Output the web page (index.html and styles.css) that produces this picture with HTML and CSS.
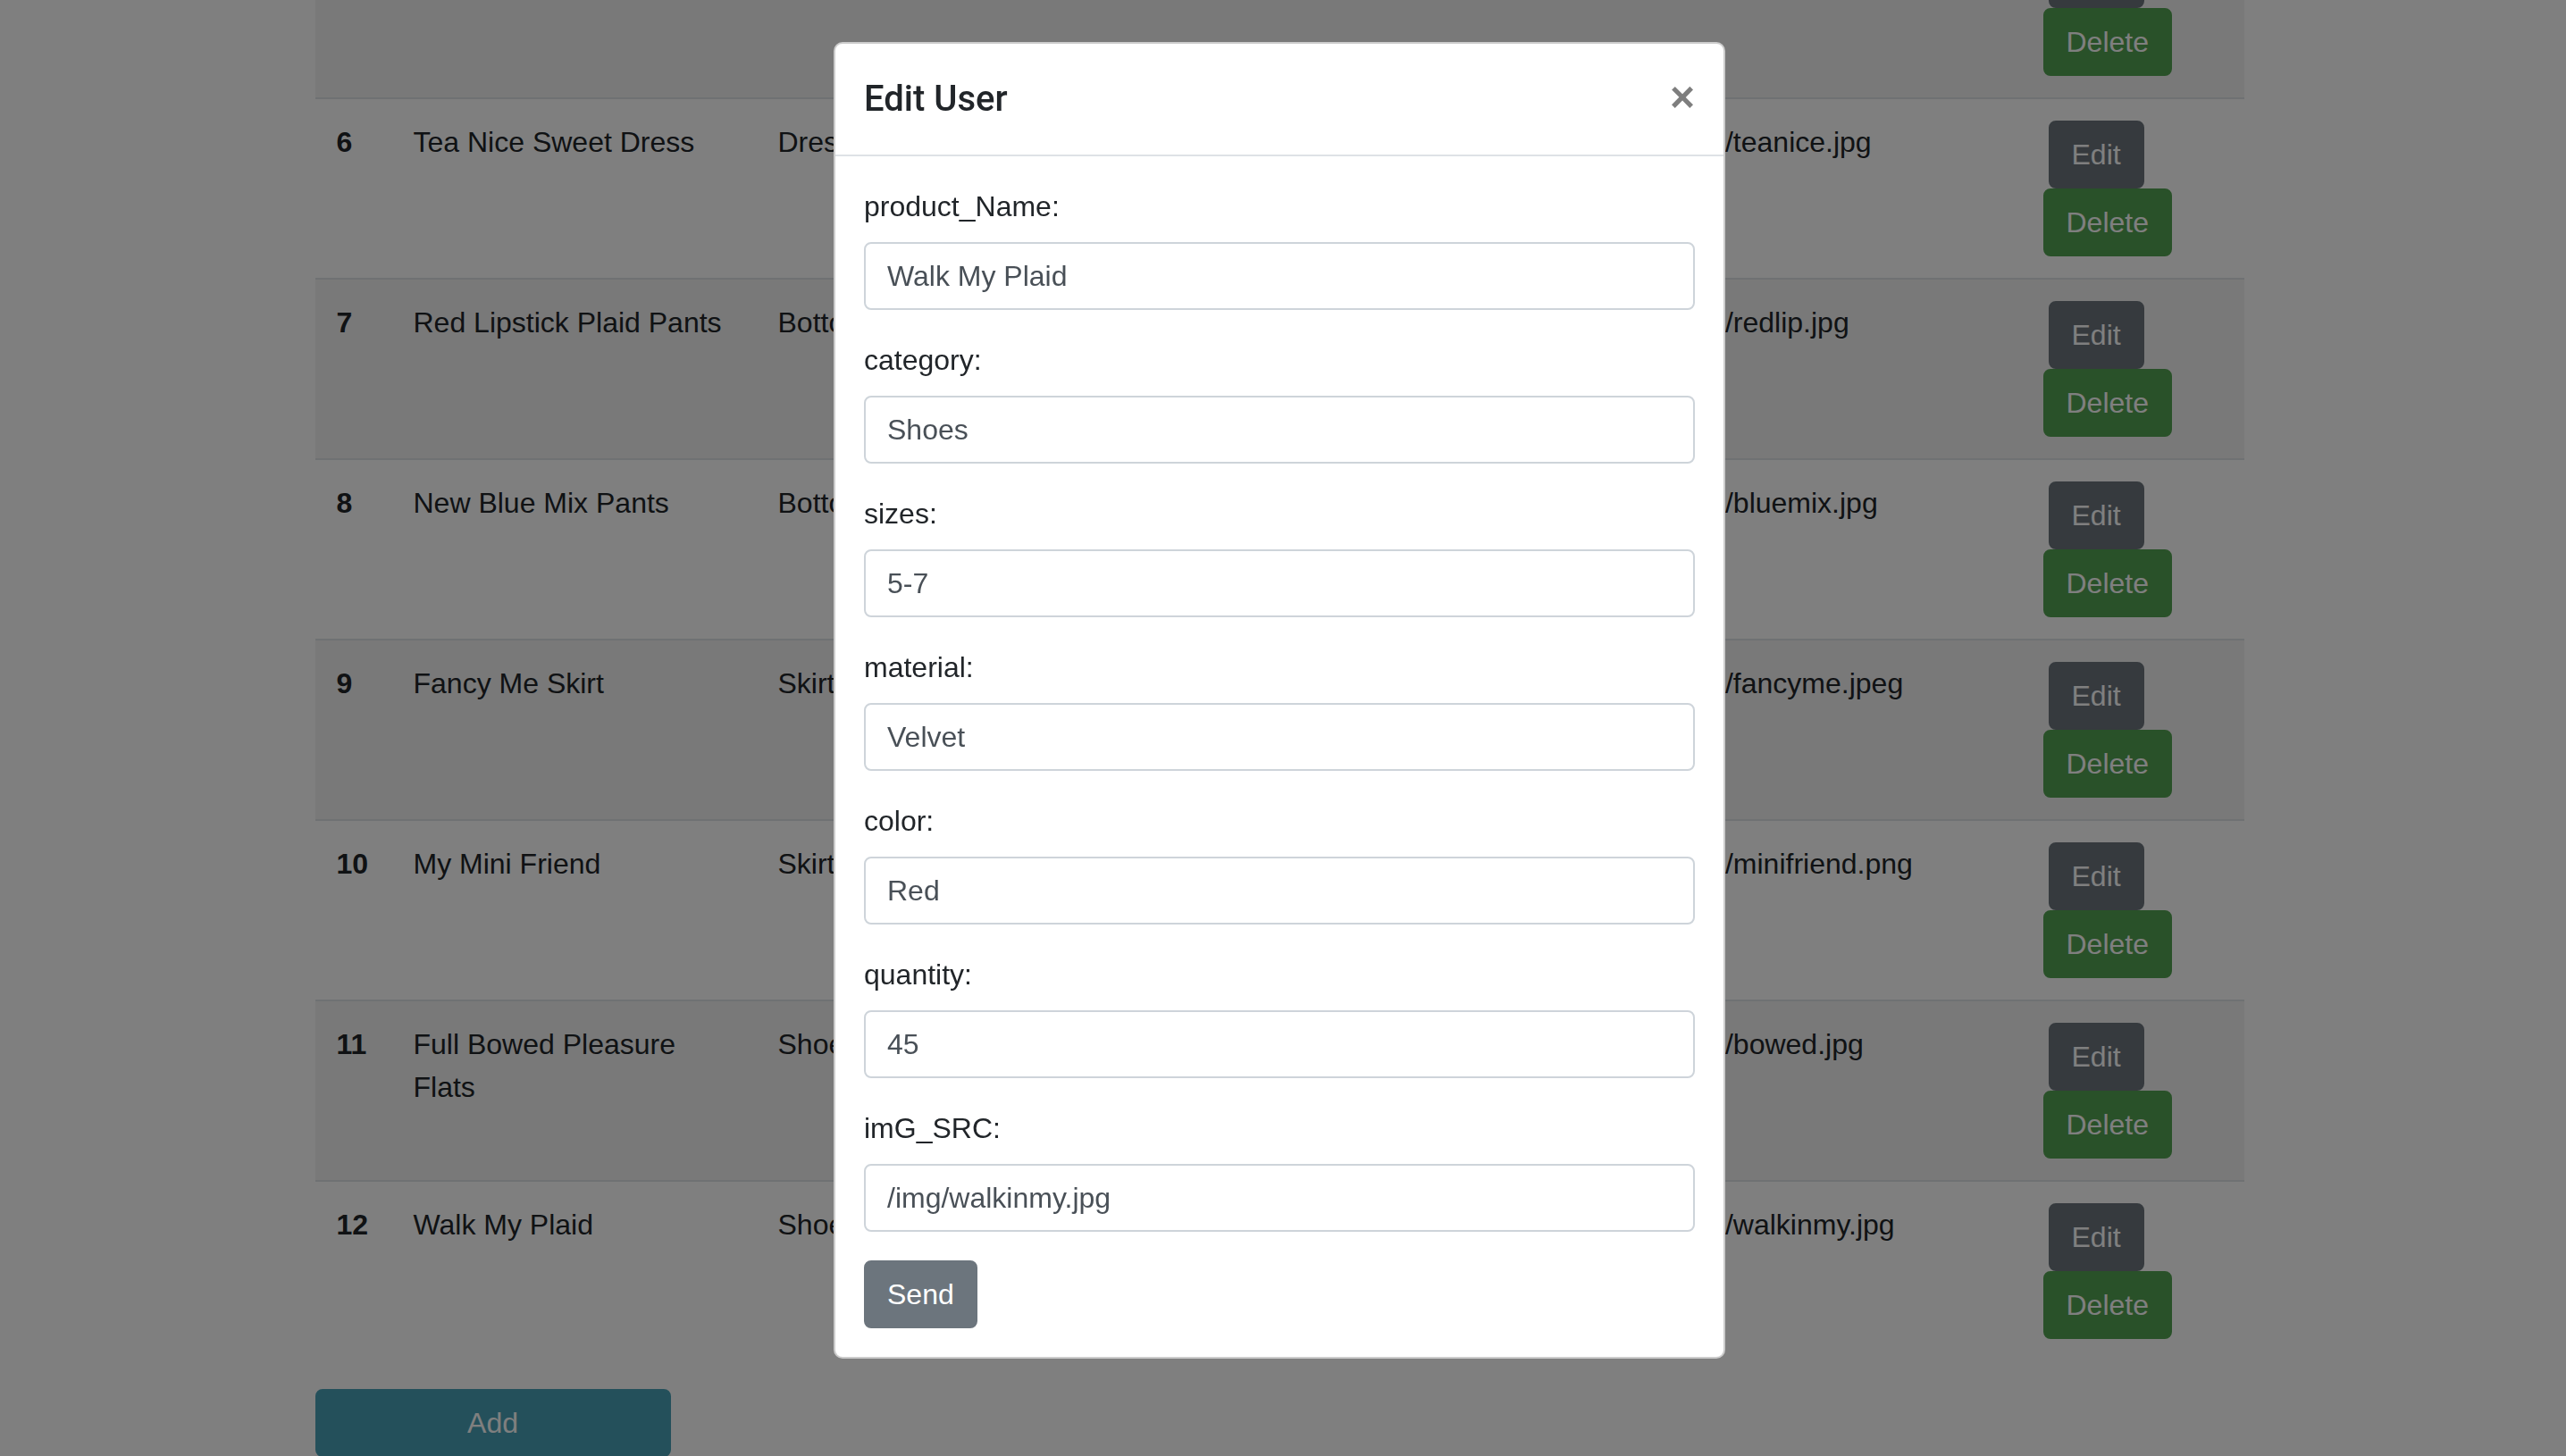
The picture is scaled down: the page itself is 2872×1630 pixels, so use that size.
FILE: index.html
```html
<!DOCTYPE html>
<html lang="en">
<head>
<meta charset="utf-8">
<title>Products</title>
<link rel="stylesheet" href="styles.css">
</head>
<body>
<div class="page">
  <table class="products">
    <colgroup>
      <col class="c-id"><col class="c-name"><col class="c-cat"><col class="c-size"><col class="c-mat"><col class="c-color"><col class="c-qty"><col class="c-img"><col class="c-act">
    </colgroup>
    <tbody>
      <tr>
        <th scope="row">5</th><td>Classic Denim Jacket</td><td>Jackets</td><td>S-L</td><td>Denim</td><td>Blue</td><td>30</td><td>/img/denim.jpg</td>
        <td><div class="actions"><button class="btn btn-edit">Edit</button><button class="btn btn-delete">Delete</button></div></td>
      </tr>
      <tr>
        <th scope="row">6</th><td>Tea Nice Sweet Dress</td><td>Dresses</td><td>S-M</td><td>Cotton</td><td>Pink</td><td>20</td><td>/img/teanice.jpg</td>
        <td><div class="actions"><button class="btn btn-edit">Edit</button><button class="btn btn-delete">Delete</button></div></td>
      </tr>
      <tr>
        <th scope="row">7</th><td>Red Lipstick Plaid Pants</td><td>Bottoms</td><td>S-L</td><td>Wool</td><td>Red</td><td>15</td><td>/img/redlip.jpg</td>
        <td><div class="actions"><button class="btn btn-edit">Edit</button><button class="btn btn-delete">Delete</button></div></td>
      </tr>
      <tr>
        <th scope="row">8</th><td>New Blue Mix Pants</td><td>Bottoms</td><td>M-L</td><td>Denim</td><td>Blue</td><td>25</td><td>/img/bluemix.jpg</td>
        <td><div class="actions"><button class="btn btn-edit">Edit</button><button class="btn btn-delete">Delete</button></div></td>
      </tr>
      <tr>
        <th scope="row">9</th><td>Fancy Me Skirt</td><td>Skirts</td><td>S-M</td><td>Silk</td><td>White</td><td>12</td><td>/img/fancyme.jpeg</td>
        <td><div class="actions"><button class="btn btn-edit">Edit</button><button class="btn btn-delete">Delete</button></div></td>
      </tr>
      <tr>
        <th scope="row">10</th><td>My Mini Friend</td><td>Skirts</td><td>XS-S</td><td>Cotton</td><td>Black</td><td>18</td><td>/img/minifriend.png</td>
        <td><div class="actions"><button class="btn btn-edit">Edit</button><button class="btn btn-delete">Delete</button></div></td>
      </tr>
      <tr>
        <th scope="row">11</th><td>Full Bowed Pleasure Flats</td><td>Shoes</td><td>6-9</td><td>Leather</td><td>Black</td><td>30</td><td>/img/bowed.jpg</td>
        <td><div class="actions"><button class="btn btn-edit">Edit</button><button class="btn btn-delete">Delete</button></div></td>
      </tr>
      <tr>
        <th scope="row">12</th><td>Walk My Plaid</td><td>Shoes</td><td>5-7</td><td>Velvet</td><td>Red</td><td>45</td><td>/img/walkinmy.jpg</td>
        <td><div class="actions"><button class="btn btn-edit">Edit</button><button class="btn btn-delete">Delete</button></div></td>
      </tr>
    </tbody>
  </table>
  <button class="btn btn-add">Add</button>
</div>

<div class="backdrop"></div>
<div class="modal">
  <div class="dialog">
    <div class="modal-header">
      <h5 class="modal-title">Edit User</h5>
      <button class="close" type="button" aria-label="Close">×</button>
    </div>
    <form class="modal-body">
      <div class="form-group">
        <label class="label">product_Name:</label>
        <input class="control" type="text" value="Walk My Plaid">
      </div>
      <div class="form-group">
        <label class="label">category:</label>
        <input class="control" type="text" value="Shoes">
      </div>
      <div class="form-group">
        <label class="label">sizes:</label>
        <input class="control" type="text" value="5-7">
      </div>
      <div class="form-group">
        <label class="label">material:</label>
        <input class="control" type="text" value="Velvet">
      </div>
      <div class="form-group">
        <label class="label">color:</label>
        <input class="control" type="text" value="Red">
      </div>
      <div class="form-group">
        <label class="label">quantity:</label>
        <input class="control" type="text" value="45">
      </div>
      <div class="form-group">
        <label class="label">imG_SRC:</label>
        <input class="control" type="text" value="/img/walkinmy.jpg">
      </div>
      <button class="btn btn-send" type="button">Send</button>
    </form>
  </div>
</div>
</body>
</html>
```

FILE: styles.css
```css
* { box-sizing: border-box; }

html, body {
  margin: 0;
  height: 100%;
  overflow: hidden;
}

body {
  font-family: "Liberation Sans", Arial, sans-serif;
  font-size: 32px;
  line-height: 48px;
  color: #212529;
  background: #ffffff;
  padding-right: 8px;
}

.page {
  width: 2159px;
  margin: -93px auto 0;
}

.products {
  width: 2159px;
  table-layout: fixed;
  border-collapse: collapse;
  margin-bottom: 32px;
}

.c-id { width: 86px; }
.c-name { width: 408px; }
.c-cat, .c-size, .c-mat, .c-color, .c-qty { width: 200px; }
.c-img { width: 416px; }
.c-act { width: 249px; }

.products th,
.products td {
  padding: 24px;
  border-top: 2px solid #dee2e6;
  vertical-align: top;
  text-align: left;
  overflow: hidden;
  white-space: normal;
}

.products th { font-weight: 700; }

.products tbody tr:nth-child(odd) {
  background: rgba(0, 0, 0, 0.05);
}

.actions {
  display: flex;
  flex-direction: column;
  align-items: flex-start;
}

.btn {
  font-family: inherit;
  font-size: 32px;
  line-height: 48px;
  padding: 12px 24px;
  border: 2px solid transparent;
  border-radius: 8px;
  color: #ffffff;
  cursor: pointer;
}

.btn-edit {
  background: #6c757d;
  border-color: #6c757d;
  margin-left: 6px;
}

.btn-delete {
  background: #53a252;
  border-color: #53a252;
}

.btn-add {
  display: block;
  width: 398px;
  background: #49a1b6;
  border-color: #49a1b6;
}

.backdrop {
  position: fixed;
  inset: 0;
  background: rgba(0, 0, 0, 0.5);
}

.modal {
  position: fixed;
  inset: 0 8px 0 0;
}

.dialog {
  width: 998px;
  margin: 47px auto 0;
  background: #ffffff;
  border: 2px solid rgba(0, 0, 0, 0.2);
  border-radius: 10px;
}

.modal-header {
  display: flex;
  align-items: flex-start;
  justify-content: space-between;
  padding: 32px;
  border-bottom: 2px solid #dee2e6;
}

.modal-title {
  margin: 0;
  font-family: Roboto, "Liberation Sans", sans-serif;
  font-size: 40px;
  line-height: 60px;
  font-weight: 500;
  color: #212529;
}

.close {
  font-family: "Liberation Sans", Arial, sans-serif;
  font-size: 48px;
  font-weight: 700;
  line-height: 1;
  color: #000000;
  opacity: 0.5;
  background: transparent;
  border: 0;
  padding: 32px;
  margin: -28px -32px -32px auto;
  text-shadow: 0 2px 0 #ffffff;
}

.modal-body {
  display: block;
  padding: 32px;
  margin: 0;
}

.form-group {
  margin-bottom: 32px;
}

.label {
  display: block;
  margin-bottom: 16px;
  color: #212529;
}

.control {
  display: block;
  width: 100%;
  height: 76px;
  padding: 12px 24px;
  font-family: inherit;
  font-size: 32px;
  line-height: 48px;
  color: #495057;
  background: #ffffff;
  border: 2px solid #ced4da;
  border-radius: 8px;
  outline: none;
}

.btn-send {
  background: #6c757d;
  border-color: #6c757d;
}
```
